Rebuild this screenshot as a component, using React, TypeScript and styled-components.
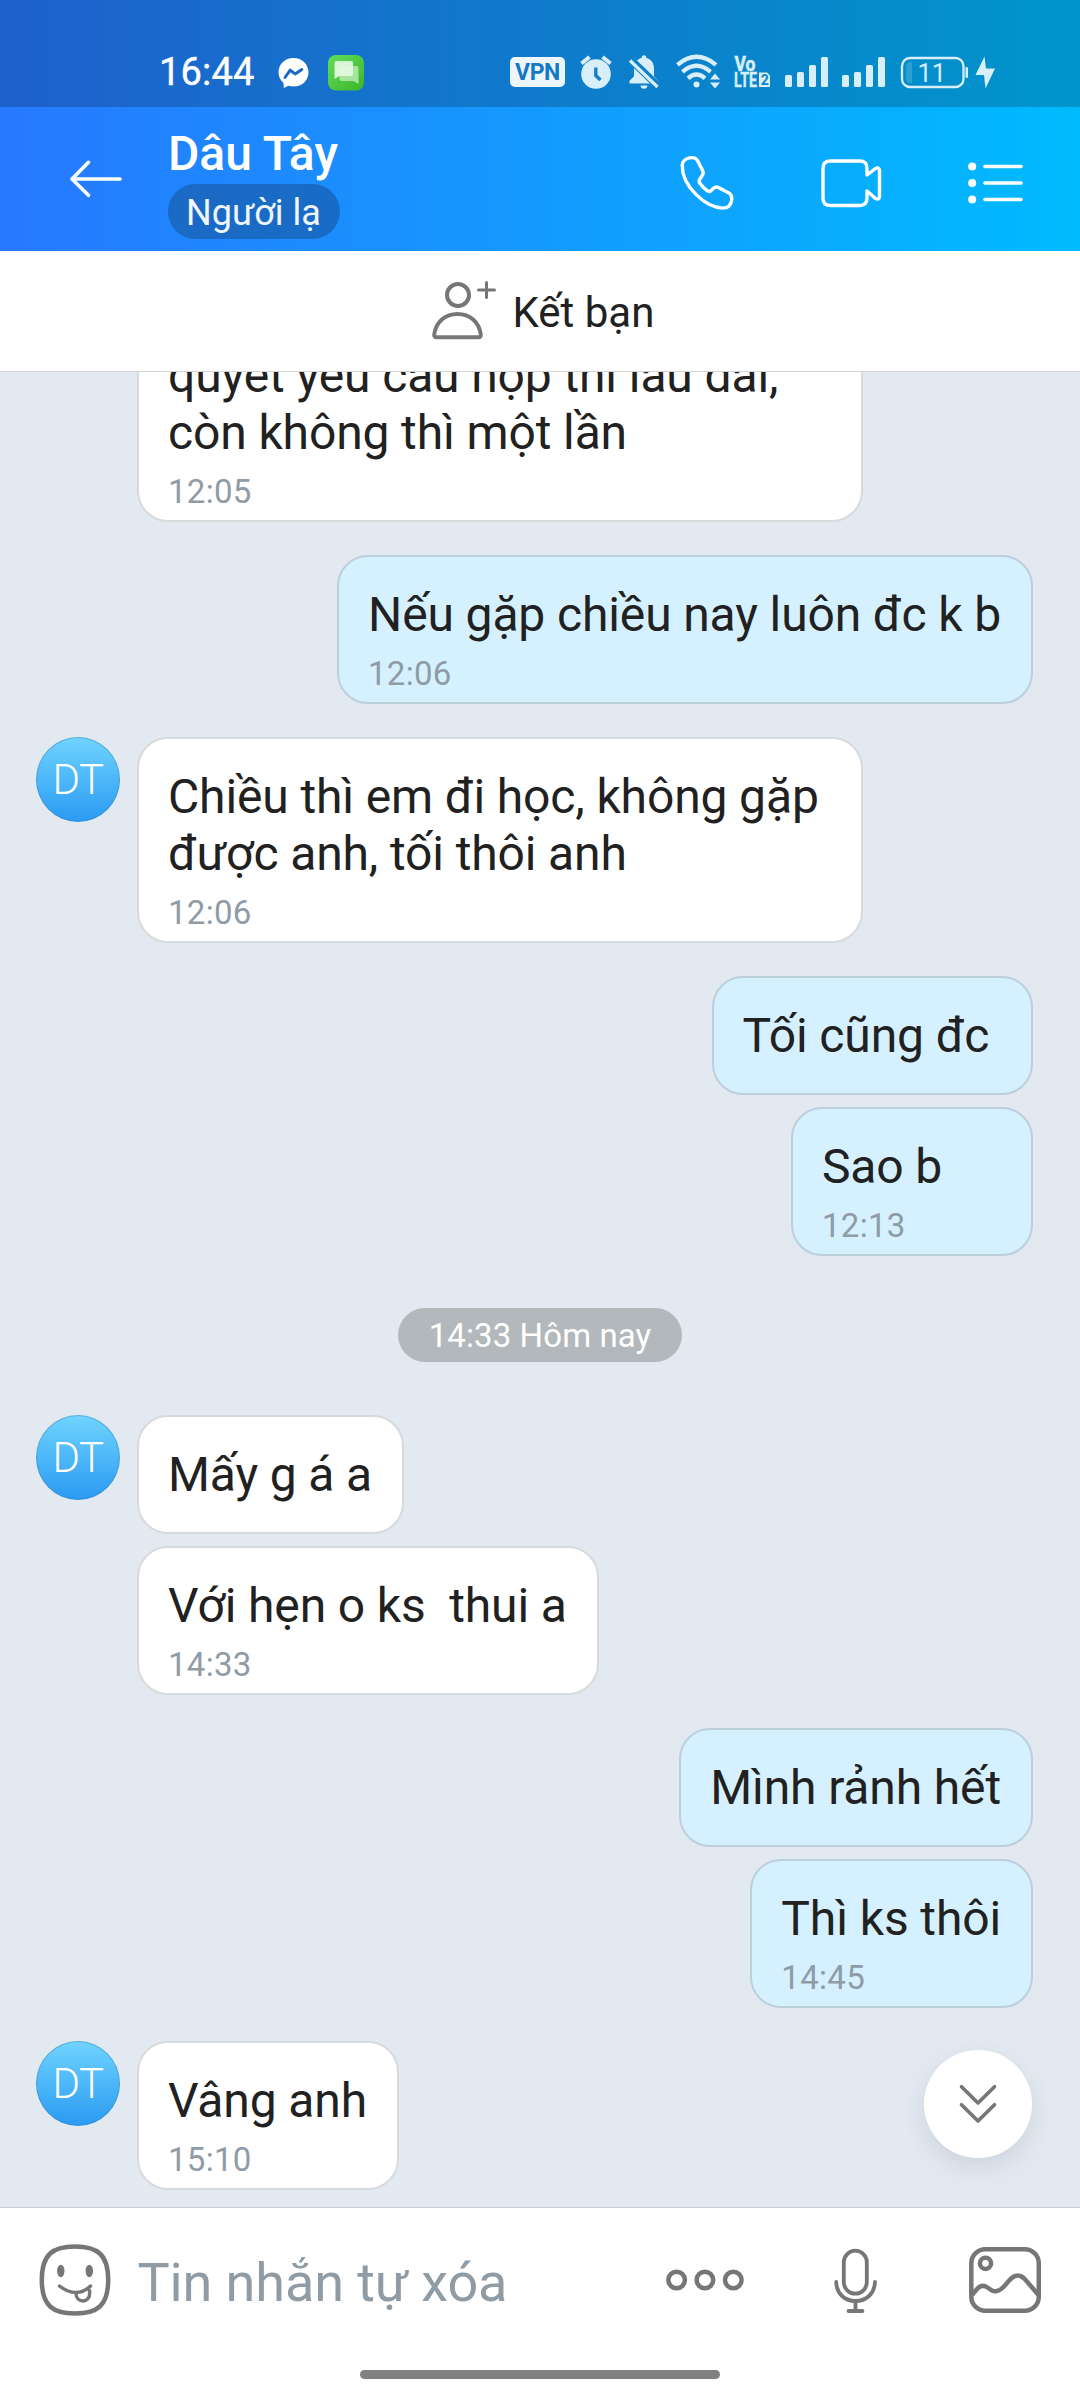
import React from "react";
import styled, { createGlobalStyle } from "styled-components";

const GlobalStyle = createGlobalStyle`
  * { box-sizing: border-box; }
  body { margin: 0; background: #fff; }
  svg { display: block; flex: none; overflow: visible; }
`;

const Screen = styled.div`
  width: 1080px;
  height: 2400px;
  display: flex;
  flex-direction: column;
  overflow: hidden;
  background: #fff;
  color: #212121;
  font-family: Roboto, "Noto Sans", sans-serif;
`;

const TopArea = styled.div`
  flex: none;
  background: linear-gradient(90deg, #2779ff 0%, #00bbfe 100%);
`;

const StatusBar = styled.div`
  height: 107px;
  padding: 54px 0 0 159px;
  display: flex;
  align-items: flex-start;
  background: rgba(0, 0, 0, 0.2);
`;

const Clock = styled.div`
  width: 119px;
  font-size: 38px;
  line-height: 37px;
  font-weight: 400;
  color: #fff;
  letter-spacing: 0.2px;
  -webkit-text-stroke: 0.4px #fff;
`;

const StatusIcons = styled.div`
  display: flex;
  margin-left: 146px;
  color: #d8eef9;
`;

const VpnBadge = styled.div`
  width: 55px;
  height: 30px;
  margin: 3px 15px 0 0;
  border-radius: 5px;
  background: #eef6fd;
  color: #1379c6;
  font-size: 23px;
  font-weight: 700;
  letter-spacing: -0.4px;
  line-height: 31px;
  text-align: center;
`;

const Header = styled.header`
  height: 144px;
  padding: 0 56px 0 70px;
  display: flex;
  align-items: flex-start;
`;

const HeaderIcon = styled.div<{ $left: number; $top: number }>`
  margin-left: ${(p) => p.$left}px;
  padding-top: ${(p) => p.$top}px;
`;

const Contact = styled.div`
  width: 511px;
  padding: 19px 0 0 46px;
  display: flex;
  flex-direction: column;
  align-items: flex-start;
`;

const Name = styled.div`
  font-size: 48px;
  line-height: 56px;
  font-weight: 500;
  color: #fff;
`;

const StrangerTag = styled.div`
  height: 55px;
  margin-top: 2px;
  padding: 0 19px 0 18px;
  border-radius: 28px;
  background: rgba(25, 95, 175, 0.72);
  color: #eff6ff;
  font-size: 36px;
  line-height: 58px;
`;

const AddFriend = styled.div`
  flex: none;
  height: 121px;
  padding: 30px 0 0 432px;
  display: flex;
  align-items: flex-start;
  border-bottom: 1px solid #d3d6d9;
  background: #fff;
`;

const AddFriendLabel = styled.div`
  margin-left: 15.5px;
  padding-top: 7px;
  font-size: 42px;
  line-height: 50px;
`;

const ChatArea = styled.main`
  flex: none;
  position: relative;
  height: 1835px;
  overflow: hidden;
  display: flex;
  flex-direction: column;
  justify-content: flex-end;
  padding: 0 47px 17px 36px;
  background: #e2e9f1;
`;

const Row = styled.div<{ $mine?: boolean; $gap: number }>`
  flex: none;
  display: flex;
  align-items: flex-start;
  justify-content: ${(p) => (p.$mine ? "flex-end" : "flex-start")};
  margin-top: ${(p) => p.$gap}px;
`;

const AvatarSlot = styled.div`
  flex: none;
  width: 101px;
`;

const Avatar = styled.div`
  width: 84px;
  height: 85px;
  border-radius: 50%;
  border: 1px solid rgba(60, 130, 180, 0.45);
  background: linear-gradient(180deg, #70d4ff 0%, #2a9af2 100%);
  background-origin: border-box;
  color: #fff;
  font-size: 42px;
  font-weight: 300;
  letter-spacing: -0.5px;
  line-height: 84px;
  text-align: center;
`;

const Bubble = styled.div<{ $mine?: boolean; $width?: number }>`
  flex: none;
  width: ${(p) => (p.$width ? p.$width + "px" : "auto")};
  min-height: 119px;
  padding: 29px 30px 9px 29px;
  border: 2px solid ${(p) => (p.$mine ? "#bccfdb" : "#d7dadd")};
  border-radius: 31px;
  background: ${(p) => (p.$mine ? "#d5f0ff" : "#fff")};
`;

const MessageText = styled.div`
  font-size: 48px;
  line-height: 57px;
  letter-spacing: -0.13px;
  white-space: pre;
`;

const Stamp = styled.div`
  margin-top: 11px;
  font-size: 33px;
  line-height: 39px;
  letter-spacing: 0.3px;
  color: #8f9ba5;
`;

const DatePill = styled.div`
  align-self: center;
  flex: none;
  width: 284px;
  height: 54px;
  margin: 52px 0 0 11px;
  border-radius: 27px;
  background: #b2b8bc;
  color: #fff;
  font-size: 33px;
  letter-spacing: 0.1px;
  line-height: 55px;
  text-align: center;
`;

const JumpButton = styled.button`
  position: absolute;
  left: 924px;
  top: 1678px;
  width: 108px;
  height: 108px;
  padding: 0;
  border: 0;
  border-radius: 50%;
  background: #fff;
  box-shadow: 0 9px 22px rgba(70, 75, 95, 0.13);
  display: flex;
  align-items: center;
  justify-content: center;
`;

const Composer = styled.footer`
  flex: none;
  height: 163px;
  padding: 36px 39px 0;
  border-top: 1px solid #c5ccd4;
  display: flex;
  align-items: flex-start;
`;

const Placeholder = styled.div`
  width: 526px;
  padding: 8px 0 0 26.5px;
  font-size: 54px;
  line-height: 62px;
  letter-spacing: -0.12px;
  color: #8f9ba5;
  white-space: nowrap;
`;

const ComposerIcon = styled.div<{ $left?: number }>`
  margin-left: ${(p) => p.$left ?? 0}px;
`;

const HomeBar = styled.div`
  flex: none;
  align-self: center;
  width: 360px;
  height: 9px;
  border-radius: 5px;
  background: #808080;
`;

const ChatAppSlot = styled.div`
  margin-left: 19px;
`;

const MessengerIcon = () => (
  <svg width="31" height="36" viewBox="0 0 31 36">
    <path d="M15.5 4C6.700 4 .5 10.300 .5 18.300c0 4.300 1.900 8 5 10.600l.3 5.100 4.700-2.200c1.600.5 3.200.8 5 .8 8.800 0 15-6.300 15-14.300S24.300 4 15.500 4z" fill="#fff" />
    <path d="M7 23.500l5.200-7.300 5 3.700 6.600-4.400" fill="none" stroke="#1a68c4" strokeWidth="3" strokeLinecap="round" strokeLinejoin="round" />
  </svg>
);

const ChatAppIcon = () => (
  <svg width="36" height="36" viewBox="0 0 36 36">
    <defs>
      <linearGradient id="chatGreen" x1="0" y1="0" x2="1" y2="1">
        <stop offset="0" stopColor="#62dd58" />
        <stop offset="1" stopColor="#3cb52c" />
      </linearGradient>
    </defs>
    <rect y="1" width="36" height="35.500" rx="8" fill="url(#chatGreen)" />
    <path d="M14 12h14q2.500 0 2.500 2.500V30l-5-3H14q-2.500 0-2.500-2.500v-10Q11.500 12 14 12z" fill="#a5e69c" />
    <path d="M8.500 7H23q2 0 2 2v11q0 2-2 2H11.500L6.500 25V9q0-2 2-2z" fill="#e4f8e1" opacity=".93" />
  </svg>
);

const StatusGlyphs = () => (
  <svg width="416" height="36" viewBox="580 54 416 36" fill="currentColor">
    <circle cx="596" cy="74" r="14.800" />
    <path d="M581.500 63.500l8-6.500M610.500 63.500l-8-6.500" stroke="currentColor" strokeWidth="4" />
    <path d="M595.800 67.500v8l4.700 4.500" fill="none" stroke="#1380cb" strokeWidth="3.400" />
    <path d="M644 55.300c1.500 0 2.400 1 2.400 2.700 5 1.300 7.600 5.300 7.600 10.500v7.700l4.500 5V83.500h-29v-2.800l4.500-4.500v-7.700c0-5.200 2.600-9.200 7.600-10.500 0-1.700.9-2.700 2.400-2.700zM640.500 85.500h7c0 2-1.500 3.300-3.500 3.300s-3.500-1.300-3.500-3.300z" />
    <path d="M629 58l30 29" stroke="#1080ca" strokeWidth="7.500" />
    <path d="M630 60.500l27.500 26.500" stroke="currentColor" strokeWidth="3.200" />
    <g fill="none" stroke="currentColor" strokeWidth="4.300">
      <path d="M677.500 64.800q19-16 38.500 0" />
      <path d="M682.500 71.800q14-12 28 0" />
      <path d="M688 78.300q8.500-7.500 17 0" />
    </g>
    <circle cx="696.500" cy="84.500" r="3" />
    <path d="M710 79.500l5-6 5 6zM710 82.500l5 6 5-6z" />
    <text x="734.500" y="71" fontSize="19.500" fontWeight="700" textLength="21" lengthAdjust="spacingAndGlyphs" stroke="currentColor" strokeWidth=".5">Vo</text>
    <text x="734" y="86.800" fontSize="19.500" fontWeight="700" textLength="23" lengthAdjust="spacingAndGlyphs" stroke="currentColor" strokeWidth=".4">LTE</text>
    <path d="M759 72.500h8l3 3v11.500h-11z" />
    <text x="760.700" y="85" fontSize="14" fontWeight="700" fill="#0c85ca">2</text>
    {[785, 842].map((x) => (
      <g key={x}>
        <rect x={x} y="75" width="7" height="12" rx="1.500" />
        <rect x={x + 12} y="72" width="7" height="15" rx="1.500" />
        <rect x={x + 24} y="65" width="7" height="22" rx="1.500" />
        <rect x={x + 36} y="57" width="7" height="30" rx="1.500" />
      </g>
    ))}
    <rect x="902" y="58" width="61.500" height="29" rx="8" fill="none" stroke="currentColor" strokeWidth="2.300" />
    <path d="M912 62v21h-1.500q-4.500 0-4.500-4.500v-12q0-4.500 4.500-4.500z" fill="#2aa0d3" />
    <rect x="965.500" y="67" width="2.500" height="11" rx="1" />
    <text x="917.500" y="82" fontSize="25.500">11</text>
    <path d="M984.500 56.500L975.500 75h8.500l1.500 13.500L995 68.500h-9z" />
  </svg>
);

const BackIcon = () => (
  <svg width="52" height="38" viewBox="0 0 52 38" fill="none" stroke="#fff" strokeWidth="3.600" strokeLinecap="round" strokeLinejoin="round">
    <path d="M2 19h48M18.500 2.300L2 19l16.500 16.300" />
  </svg>
);

const PhoneIcon = () => (
  <svg width="54" height="54" viewBox="0 0 54 54" fill="none" stroke="#fff" strokeWidth="3.400" strokeLinejoin="round">
    <path d="M2.200 9.500C2.200 5.500 5.500 2.700 9.500 1.900c4.500-.9 6.700.2 8 2.600l5.200 10.300c1.200 2.500.6 3.300-.7 5.300l-2.300 3.200c-1 1.600-.8 2.500.2 4 2.200 3.200 4.200 5.200 7.200 7.400 1.700 1.200 2.500 1.200 4-.1l2.700-2.500c1.700-1.500 2.800-1.600 4.600-.7l10 5.400c2.800 1.500 3.600 3.300 3.300 6.600-.4 6-4 8.700-9 8.700C26 51.500 2.200 31 2.200 9.500z" />
  </svg>
);

const VideoIcon = () => (
  <svg width="61" height="49" viewBox="0 0 61 49" fill="none" stroke="#fff" strokeWidth="3.400" strokeLinejoin="round">
    <path d="M46 16v-6.500q0-7.500-7.500-7.500h-29q-7.500 0-7.500 7.500v30Q2 46.500 9.500 46.500h29q7.500 0 7.500-7.500v-7l8.500 7.500q4 2 4-2.500V12q0-4.500-4-2.500z" />
  </svg>
);

const ListIcon = () => (
  <svg width="56" height="42" viewBox="0 0 56 42">
    {[4.500, 21, 37.500].map((y) => (
      <g key={y}>
        <circle cx="4.200" cy={y} r="4" fill="#fff" />
        <path d={`M17 ${y}h36`} stroke="#fff" strokeWidth="3.600" strokeLinecap="round" />
      </g>
    ))}
  </svg>
);

const AddPersonIcon = () => (
  <svg width="65" height="59" viewBox="0 0 65 59" fill="none" stroke="#767676" strokeWidth="4" strokeLinecap="round" strokeLinejoin="round">
    <circle cx="26" cy="14" r="11" />
    <path d="M2.200 53.500C4 41 13 33 25.500 33S47 41 48.800 53.500q.2 2.700-2.500 2.700H4.700q-2.700 0-2.500-2.700z" />
    <path d="M46.500 9h16M54.500 1.500v15" strokeWidth="3" />
  </svg>
);

const JumpIcon = () => (
  <svg width="38" height="40" viewBox="0 0 38 40" fill="none" stroke="#767676" strokeWidth="3.600" strokeLinecap="round" strokeLinejoin="round">
    <path d="M2.500 2.700L19 19 35.500 2.700M2.500 20.700L19 37 35.500 20.700" />
  </svg>
);

const SmileyIcon = () => (
  <svg width="72" height="72" viewBox="0 0 72 72" fill="none" stroke="#767676" strokeWidth="4.500" strokeLinecap="round">
    <path d="M36 2.500C58 2.500 69.200 10 69.200 36S58 69.500 36 69.500 2.800 62 2.800 36 14 2.500 36 2.500z" />
    <ellipse cx="21.800" cy="27" rx="3.700" ry="6.200" fill="#767676" stroke="none" />
    <ellipse cx="50.300" cy="27" rx="3.700" ry="6.200" fill="#767676" stroke="none" />
    <path d="M20.500 42q8 6.500 16 6.500 8.500 0 15-6.500M37 49c0 5 3.200 8 7 8s7.500-3 6.500-10.500" strokeWidth="3.500" />
  </svg>
);

const MoreIcon = () => (
  <svg width="78" height="72" viewBox="0 0 78 72" fill="none" stroke="#767676" strokeWidth="4.500">
    <circle cx="10.600" cy="36" r="8.300" />
    <circle cx="38.900" cy="36" r="8.300" />
    <circle cx="67.300" cy="36" r="8.300" />
  </svg>
);

const MicIcon = () => (
  <svg width="44" height="72" viewBox="0 0 44 72" fill="none" stroke="#767676" strokeWidth="3.800" strokeLinecap="round">
    <rect x="9.800" y="6.700" width="23" height="43" rx="11.500" />
    <path d="M2.200 38C2.500 50 11 57 21.500 57S40.500 50 41 38M21.500 57v9.500M14.500 67h14" />
  </svg>
);

const ImageIcon = () => (
  <svg width="72" height="72" viewBox="0 0 72 72" fill="none" stroke="#767676" strokeWidth="4.500">
    <rect x="2.300" y="5.300" width="67.500" height="61.500" rx="14" />
    <circle cx="16.500" cy="19.300" r="5.600" />
    <path d="M3 51L8 45q5-5.500 10.500-1.500c4 3 6 4.500 9.500 3.500 8-1 12-15.500 20.500-15.500 4.500 0 6.500 2.500 9 5.500L69.500 51" />
  </svg>
);

type Message = {
  lines: string[];
  time?: string;
  mine?: boolean;
  avatar?: boolean;
  gap: number;
  width?: number;
};

const before: Message[] = [
  { lines: ["quyết yêu cầu hợp thì lâu dài,", "còn không thì một lần"], time: "12:05", gap: 0, width: 726 },
  { lines: ["Nếu gặp chiều nay luôn đc k b"], time: "12:06", mine: true, gap: 33 },
  { lines: ["Chiều thì em đi học, không gặp ", "được anh, tối thôi anh"], time: "12:06", avatar: true, gap: 33 },
  { lines: ["Tối cũng đc "], mine: true, gap: 33 },
  { lines: ["Sao b"], time: "12:13", mine: true, gap: 12, width: 242 },
];

const after: Message[] = [
  { lines: ["Mấy g á a"], avatar: true, gap: 53 },
  { lines: ["Với hẹn o ks  thui a"], time: "14:33", gap: 12 },
  { lines: ["Mình rảnh hết"], mine: true, gap: 33 },
  { lines: ["Thì ks thôi"], time: "14:45", mine: true, gap: 12 },
  { lines: ["Vâng anh"], time: "15:10", avatar: true, gap: 33 },
];

const MessageRow = ({ m }: { m: Message }) => (
  <Row $mine={m.mine} $gap={m.gap}>
    {!m.mine && <AvatarSlot>{m.avatar && <Avatar>DT</Avatar>}</AvatarSlot>}
    <Bubble $mine={m.mine} $width={m.width}>
      {m.lines.map((line) => (
        <MessageText key={line}>{line}</MessageText>
      ))}
      {m.time && <Stamp>{m.time}</Stamp>}
    </Bubble>
  </Row>
);

export default function App() {
  return (
    <Screen>
      <GlobalStyle />
      <TopArea>
        <StatusBar>
          <Clock>16:44</Clock>
          <MessengerIcon />
          <ChatAppSlot><ChatAppIcon /></ChatAppSlot>
          <StatusIcons>
            <VpnBadge>VPN</VpnBadge>
            <StatusGlyphs />
          </StatusIcons>
        </StatusBar>
        <Header>
          <HeaderIcon $left={0} $top={53}><BackIcon /></HeaderIcon>
          <Contact>
            <Name>Dâu Tây</Name>
            <StrangerTag>Người lạ</StrangerTag>
          </Contact>
          <HeaderIcon $left={49} $top={49}><PhoneIcon /></HeaderIcon>
          <HeaderIcon $left={86.5} $top={52}><VideoIcon /></HeaderIcon>
          <HeaderIcon $left={86.5} $top={55}><ListIcon /></HeaderIcon>
        </Header>
      </TopArea>
      <AddFriend>
        <AddPersonIcon />
        <AddFriendLabel>Kết bạn</AddFriendLabel>
      </AddFriend>
      <ChatArea>
        {before.map((m) => <MessageRow key={m.lines[0]} m={m} />)}
        <DatePill>14:33 Hôm nay</DatePill>
        {after.map((m) => <MessageRow key={m.lines[0]} m={m} />)}
        <JumpButton><JumpIcon /></JumpButton>
      </ChatArea>
      <Composer>
        <ComposerIcon><SmileyIcon /></ComposerIcon>
        <Placeholder>Tin nhắn tự xóa</Placeholder>
        <ComposerIcon $left={29}><MoreIcon /></ComposerIcon>
        <ComposerIcon $left={90}><MicIcon /></ComposerIcon>
        <ComposerIcon $left={91}><ImageIcon /></ComposerIcon>
      </Composer>
      <HomeBar />
    </Screen>
  );
}
